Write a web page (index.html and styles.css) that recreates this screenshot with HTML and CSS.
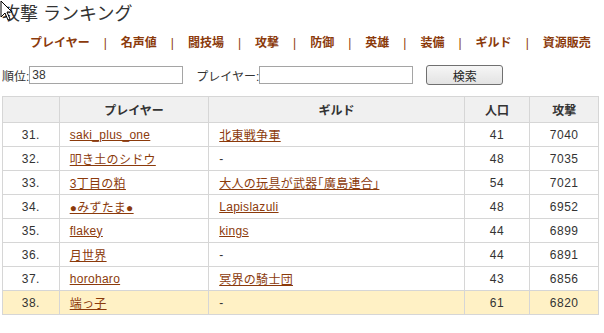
FILE: index.html
```html
<!DOCTYPE html>
<html lang="ja">
<head>
  <meta charset="UTF-8" />
  <title>攻撃 ランキング</title>
  <link rel="stylesheet" href="styles.css">
</head>
<body>
  <svg class="cursor" width="14" height="22" viewBox="0 0 14 22">
    <path d="M1 1 L1 17 L5 13 L8 20 L10 19 L7 12 L12 12 Z" fill="#fff" stroke="#000" stroke-width="1"/>
  </svg>
  <h1 class="title">攻撃 ランキング</h1>

  <ul class="nav">
    <li><a href="#">プレイヤー</a></li>
    <li><a href="#">名声値</a></li>
    <li><a href="#">闘技場</a></li>
    <li><a href="#">攻撃</a></li>
    <li><a href="#">防御</a></li>
    <li><a href="#">英雄</a></li>
    <li><a href="#">装備</a></li>
    <li><a href="#">ギルド</a></li>
    <li><a href="#">資源販売</a></li>
  </ul>

  <form class="search">
    <label>順位:</label><input type="text" class="field" value="38" />
    <label class="second">プレイヤー:</label><input type="text" class="field" />
    <button type="button" class="btn">検索</button>
  </form>

  <table class="ranking">
    <thead>
      <tr>
        <th class="c-rank"></th>
        <th class="c-player">プレイヤー</th>
        <th class="c-guild">ギルド</th>
        <th class="c-pop">人口</th>
        <th class="c-atk">攻撃</th>
      </tr>
    </thead>
    <tbody>
      <tr><td class="num">31.</td><td><a href="#">saki_plus_one</a></td><td><a href="#">北東戦争軍</a></td><td class="num">41</td><td class="num">7040</td></tr>
      <tr><td class="num">32.</td><td><a href="#">叩き土のシドウ</a></td><td>-</td><td class="num">48</td><td class="num">7035</td></tr>
      <tr><td class="num">33.</td><td><a href="#">3丁目の粕</a></td><td><a href="#">大人の玩具が武器｢廣島連合｣</a></td><td class="num">54</td><td class="num">7021</td></tr>
      <tr><td class="num">34.</td><td><a href="#">●みずたま●</a></td><td><a href="#">Lapislazuli</a></td><td class="num">48</td><td class="num">6952</td></tr>
      <tr><td class="num">35.</td><td><a href="#">flakey</a></td><td><a href="#">kings</a></td><td class="num">44</td><td class="num">6899</td></tr>
      <tr><td class="num">36.</td><td><a href="#">月世界</a></td><td>-</td><td class="num">44</td><td class="num">6891</td></tr>
      <tr><td class="num">37.</td><td><a href="#">horoharo</a></td><td><a href="#">冥界の騎士団</a></td><td class="num">43</td><td class="num">6856</td></tr>
      <tr class="me"><td class="num">38.</td><td><a href="#">端っ子</a></td><td>-</td><td class="num">61</td><td class="num">6820</td></tr>
    </tbody>
  </table>
</body>
</html>
```

FILE: styles.css
```css
body {
  margin: 0;
  padding: 3px 2px;
  background: #fff;
  color: #333;
  font-family: "Liberation Sans", Arial, "Noto Sans CJK JP", sans-serif;
  font-size: 12px;
}

.cursor {
  position: absolute;
  left: 0;
  top: 0;
}

.title {
  margin: 0;
  font-size: 18px;
  font-weight: normal;
  line-height: 22px;
  color: #333;
}

.nav {
  display: flex;
  list-style: none;
  margin: 10px 0 0 0;
  padding: 0 0 0 28px;
  line-height: 16px;
}

.nav li {
  font-weight: bold;
  font-size: 12px;
}

.nav li + li::before {
  content: "|";
  color: #8b3a0b;
  margin: 0 14px;
  font-weight: normal;
}

.nav a {
  color: #8b3a0b;
  text-decoration: none;
}

.search {
  display: flex;
  align-items: center;
  margin-top: 14px;
  height: 20px;
}

.search label {
  font-size: 12px;
  color: #333;
}

.search .second {
  margin-left: 13px;
}

.field {
  width: 154px;
  height: 18px;
  box-sizing: border-box;
  border: 1px solid #a5a5a5;
  padding: 0 2px;
  font-family: "Liberation Sans", Arial, sans-serif;
  font-size: 12px;
  color: #333;
  margin: 0;
}

.btn {
  width: 77px;
  height: 20px;
  margin-left: 13px;
  border: 1px solid #707070;
  border-radius: 3px;
  background: linear-gradient(#f6f6f6, #e3e3e3);
  font-family: "Liberation Sans", "Noto Sans CJK JP", sans-serif;
  font-size: 12px;
  color: #222;
  padding: 0;
}

.ranking {
  margin-top: 11px;
  width: 597px;
  border-collapse: collapse;
  border: 1px solid #d6d6d6;
}

.ranking th,
.ranking td {
  border: 1px solid #d6d6d6;
  height: 23px;
  padding: 0 0 0 10px;
  text-align: left;
}

.ranking th {
  background: #f0f0f0;
  font-weight: bold;
  text-align: center;
  padding: 0;
  height: 25px;
}

.ranking td.num {
  text-align: center;
  padding: 0;
  letter-spacing: 0.5px;
}

.c-rank { width: 56px; }
.c-player { width: 149px; }
.c-guild { width: 256px; }
.c-pop { width: 65px; }
.c-atk { width: 68px; }

.ranking a {
  color: #8b3a0b;
  text-decoration: underline;
  letter-spacing: 0.3px;
}

.ranking tr.me td {
  background: #fff1c5;
}
```
